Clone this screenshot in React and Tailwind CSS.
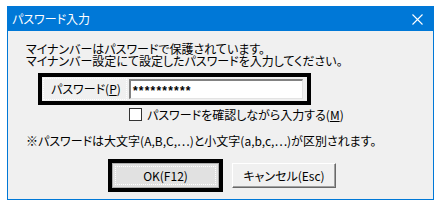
import React from 'react';

const font = "font-['Noto_Sans_CJK_JP','Noto_Sans',sans-serif] [font-feature-settings:'palt']";

const CloseIcon = () => (
  <svg width="11" height="11" viewBox="0 0 11 11" className="block">
    <path d="M0.5 0.5 L10.5 10.5 M10.5 0.5 L0.5 10.5" stroke="#ffffff" strokeWidth="1.1" />
  </svg>
);

const App = () => {
  return (
    <div className={`w-[443px] h-[209px] bg-white pt-[6px] pl-[7px] ${font}`}>
      <div className="w-[427px] h-[194px] border border-[#0078d7] bg-[#f0f0f0] flex flex-col">
        {/* title bar */}
        <div className="h-[24px] bg-[#0078d7] flex items-center justify-between pl-[4px] pr-[10px]">
          <span className="text-white text-[12px] leading-none">パスワード入力</span>
          <CloseIcon />
        </div>

        <div className="flex flex-col pl-[18px] pt-[12px] text-[12px] leading-[12px] text-black">
          <p>
            マイナンバーはパスワードで保護されています。
            <br />
            マイナンバー設定にて設定したパスワードを入力してください。
          </p>

          <div className="mt-[6px] ml-[12px] w-[273px] h-[32px] border-4 border-black flex items-center">
            <div className="ml-[1px] h-[22px] flex-1 flex items-center border border-dotted border-white mr-[2px] pl-[7px]">
              <span>
                パスワード(<span className="underline">P</span>)
              </span>
            </div>
            <div className="w-[174px] h-[20px] mr-[4px] bg-white border-t-2 border-l-2 border-t-[#828282] border-l-[#828282] border-r border-b border-r-[#e3e3e3] border-b-[#e3e3e3] flex items-center pl-[2px] pt-[3px] text-[12px] font-bold font-['Liberation_Sans',sans-serif] tracking-[1.2px]">
              **********
            </div>
          </div>

          <div className="mt-[3px] ml-[103px] h-[13px] flex items-center gap-[5px]">
            <div className="w-[13px] h-[13px] bg-white border border-[#333333]" />
            <span>
              パスワードを確認しながら入力する(<span className="underline">M</span>)
            </span>
          </div>

          <p className="mt-[14px]">※パスワードは大文字(A,B,C,…)と小文字(a,b,c,…)が区別されます。</p>

          <div className="mt-[12px] ml-[82px] flex items-center gap-[9px]">
            <div className="border-4 border-black">
              <button className="w-[107px] h-[25px] bg-[#e1e1e1] border border-[#adadad] flex items-center justify-center p-[2px]">
                <span className="w-full h-full border border-dotted border-[#ffffff] flex items-center justify-center">
                  OK(F12)
                </span>
              </button>
            </div>
            <button className="w-[104px] h-[25px] bg-[#f0f0f0] border border-t-white border-l-white border-r-[#696969] border-b-[#696969] shadow-[inset_-1px_-1px_0_#a0a0a0] flex items-center justify-center">
              キャンセル(Esc)
            </button>
          </div>
        </div>
      </div>
    </div>
  );
};

export default App;
